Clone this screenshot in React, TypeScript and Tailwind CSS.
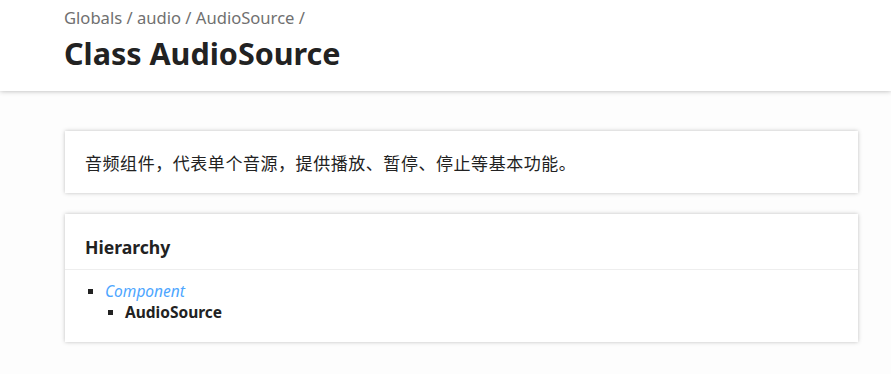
import React from "react";

export default function App() {
  const font = { fontFamily: '"Noto Sans", "Noto Sans CJK SC", sans-serif' };
  return (
    <div className="min-h-[374px] bg-[#fdfdfd] text-[#222]" style={font}>
      <header className="relative z-10 h-[91px] bg-white pl-[64px] pt-[6px] shadow-[0_0_5px_rgba(0,0,0,0.3)]">
        <div className="text-[16.6px] leading-[24px] text-[#707070]">Globals / audio / AudioSource /</div>
        <h1 className="mt-[3px] text-[30.5px] font-bold leading-[40px] text-[#222]">Class AudioSource</h1>
      </header>
      <main className="pl-[65px] pr-[33px] pt-[40px]">
        <section className="bg-white px-[20px] pt-[22px] pb-[18px] shadow-[0_0_4px_rgba(0,0,0,0.25)]">
          <p className="text-[17px] leading-[22px] tracking-[0.55px]">音频组件，代表单个音源，提供播放、暂停、停止等基本功能。</p>
        </section>
        <section className="mt-[21px] bg-white px-[20px] pt-[20px] pb-[19px] shadow-[0_0_4px_rgba(0,0,0,0.25)]">
          <h4 className="-mx-[20px] mb-[11px] border-b border-[#eee] px-[20px] pb-[10px] pt-[1px] text-[17.6px] font-bold leading-[24px]">
            Hierarchy
          </h4>
          <div className="pl-[3px]">
            <div className="flex h-[21px] items-center">
              <span className="mr-[12px] h-[5px] w-[5px] bg-[#222]" />
              <span className="text-[15.5px] italic text-[#4da6ff]">Component</span>
            </div>
            <div className="flex h-[21px] items-center pl-[20px]">
              <span className="mr-[12px] h-[5px] w-[5px] bg-[#222]" />
              <span className="text-[15.5px] font-bold">AudioSource</span>
            </div>
          </div>
        </section>
      </main>
    </div>
  );
}
